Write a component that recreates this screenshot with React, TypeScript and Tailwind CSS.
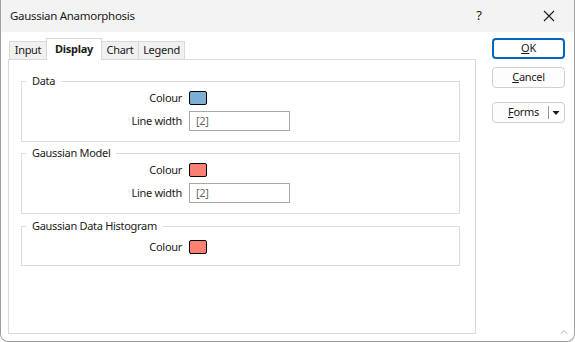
import { ChevronUp } from "lucide-react";

const font = { fontFamily: '"Noto Sans", "Open Sans", sans-serif' };

function Swatch({ color }: { color: string }) {
    return (
        <div
            className={`w-[18px] h-[14px] rounded-[2px] border border-black ${color}`}
        />
    );
}

function Row({ label, children }: { label: string; children: React.ReactNode }) {
    return (
        <div className="flex items-center h-[20px]">
            <span className="w-[163px] text-right pr-[7px]">{label}</span>
            {children}
        </div>
    );
}

function WidthBox() {
    return (
        <div className="w-[101px] h-[20px] border border-[#a8a8a8] bg-white flex items-center pl-[6px] text-[#6a6a6a]">
            [2]
        </div>
    );
}

function Group({
    title,
    className,
    children,
}: {
    title: string;
    className?: string;
    children: React.ReactNode;
}) {
    return (
        <fieldset
            className={`border border-[#dcdcdc] pl-[4px] ml-[12px] w-[439px] ${className ?? ""}`}
        >
            <legend className="px-[6px] leading-[16px]">{title}</legend>
            {children}
        </fieldset>
    );
}

export default function App() {
    return (
        <div
            className="relative w-[575px] h-[342px] bg-white border-x border-b border-[#a0a0a0] rounded-b-[8px] overflow-hidden flex flex-col text-[11px] tracking-[-0.3px] text-[#1a1a1a]"
            style={font}
        >
            <div className="h-[32px] bg-[#f3f3f3] flex items-center pl-[9px] text-[11.5px]">
                <span className="flex-1">Gaussian Anamorphosis</span>
                <span className="w-[14px] text-center text-[13px] mr-[57px]">?</span>
                <svg width="12" height="12" viewBox="0 0 12 12" className="mr-[19px]">
                    <path d="M1 1 L11 11 M11 1 L1 11" stroke="#1a1a1a" strokeWidth="1.1" />
                </svg>
            </div>

            <div className="flex flex-1 pt-[6px] pl-[7px]">
                <div className="w-[468px] flex flex-col pb-[7px]">
                    <div className="flex items-end h-[21px] pl-[1px] relative z-10">
                        <div className="h-[18px] w-[37px] border border-r-0 border-b-0 border-[#d9d9d9] bg-[#f0f0f0] flex items-center justify-center">
                            Input
                        </div>
                        <div className="h-[22px] w-[56px] -mb-px border border-b-0 border-[#d9d9d9] bg-white flex items-center justify-center font-bold">
                            Display
                        </div>
                        <div className="h-[18px] w-[37px] border border-l-0 border-b-0 border-[#d9d9d9] bg-[#f0f0f0] flex items-center justify-center">
                            Chart
                        </div>
                        <div className="h-[18px] w-[46px] border border-l-0 border-b-0 border-[#d9d9d9] bg-[#f0f0f0] flex items-center justify-center">
                            Legend
                        </div>
                    </div>
                    <div className="flex-1 border border-[#d9d9d9] pt-[13px]">
                        <Group title="Data">
                            <div className="-mt-[1px]">
                                <Row label="Colour">
                                    <Swatch color="bg-[#7bafd4]" />
                                </Row>
                                <div className="mt-[3px] mb-[10px]">
                                    <Row label="Line width">
                                        <WidthBox />
                                    </Row>
                                </div>
                            </div>
                        </Group>
                        <Group title="Gaussian Model" className="mt-[3px]">
                            <div className="-mt-[1px]">
                                <Row label="Colour">
                                    <Swatch color="bg-[#fa8072]" />
                                </Row>
                                <div className="mt-[3px] mb-[10px]">
                                    <Row label="Line width">
                                        <WidthBox />
                                    </Row>
                                </div>
                            </div>
                        </Group>
                        <Group title="Gaussian Data Histogram" className="mt-[4px]">
                            <div className="mt-[3px] mb-[8px]">
                                <Row label="Colour">
                                    <Swatch color="bg-[#fa8072]" />
                                </Row>
                            </div>
                        </Group>
                    </div>
                </div>

                <div className="ml-[16px] w-[73px] flex flex-col">
                    <button className="h-[21px] rounded-[4px] border-2 border-[#0067c0] bg-white">
                        <span className="underline">O</span>K
                    </button>
                    <button className="mt-[8px] h-[21px] rounded-[4px] border border-[#d0d0d0] bg-[#fdfdfd]">
                        <span className="underline">C</span>ancel
                    </button>
                    <div className="mt-[14px] h-[21px] rounded-[4px] border border-[#d0d0d0] bg-[#fdfdfd] flex items-center">
                        <span className="flex-1 text-center pl-[6px]">
                            <span className="underline">F</span>orms
                        </span>
                        <span className="w-px h-[13px] bg-[#9a9a9a]" />
                        <svg width="15" height="8" viewBox="0 0 15 8">
                            <path d="M3.5 2 L10.5 2 L7 6 Z" fill="#1a1a1a" />
                        </svg>
                    </div>
                </div>
            </div>

            <ChevronUp
                className="absolute right-[4px] bottom-[3px] text-[#7a7a7a]"
                size={12}
                strokeWidth={1.2}
            />
        </div>
    );
}
